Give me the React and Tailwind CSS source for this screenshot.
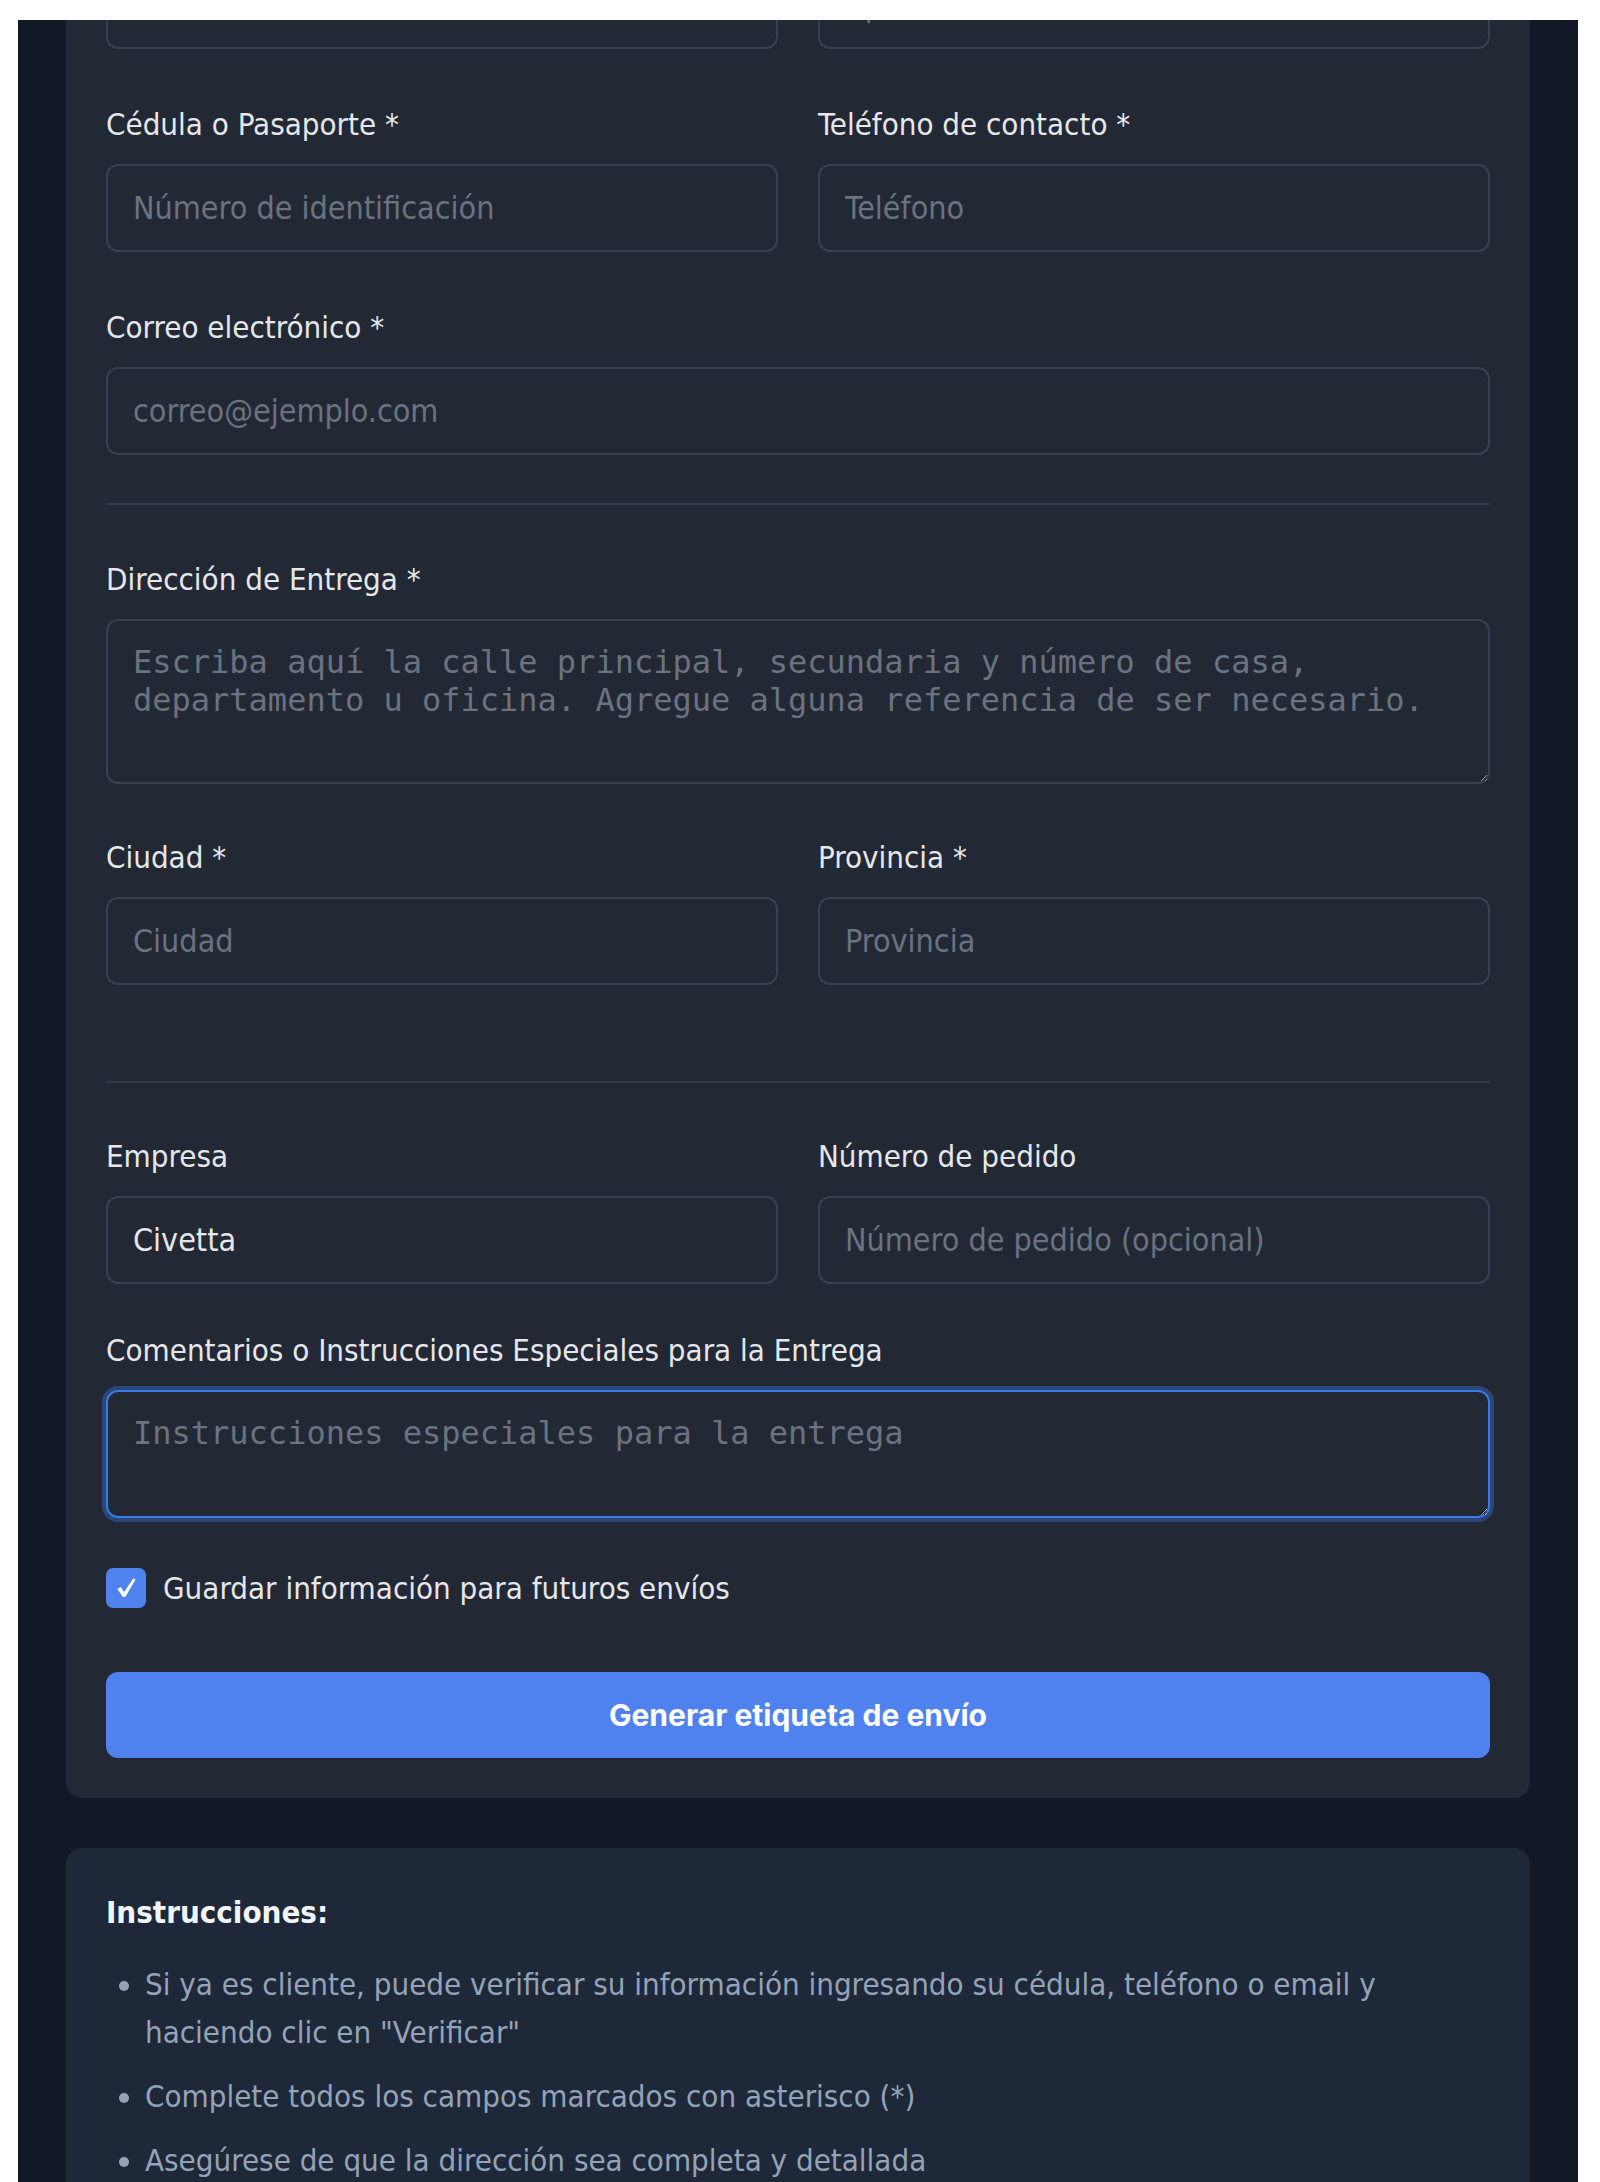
// --- shared styles ------------------------------------------------------

const SANS = "font-['DejaVu_Sans_Condensed','Liberation_Sans',sans-serif]";
const MONO = "font-['DejaVu_Sans_Mono','Liberation_Mono',monospace]";

const inputClass =
  "block w-full h-[88px] rounded-[12px] border-2 border-[#394150] bg-transparent px-[25px] text-[32px] text-[#e5e7eb] placeholder:text-[#6b7280] outline-none";

function Label({ children }) {
  return (
    <label className={`block text-[31px] leading-[48px] mb-[16px] text-[#e5e7eb] ${SANS}`}>
      {children}
    </label>
  );
}

function Field({ label, placeholder, value }) {
  return (
    <div>
      <Label>{label}</Label>
      <input
        type="text"
        placeholder={placeholder}
        defaultValue={value}
        className={`${inputClass} ${SANS}`}
      />
    </div>
  );
}

// heavy hand-drawn style tick, like the ✓ in the reference checkbox
function Tick() {
  return (
    <svg viewBox="0 0 24 24" className="h-[28px] w-[28px]" fill="white">
      <path d="M4.5 12.8 L7.6 11.2 L10.4 15.4 L18.4 3.6 L20.2 4.8 L11.4 19.8 L9.4 19.8 Z" />
    </svg>
  );
}

const INSTRUCTIONS = [
  'Si ya es cliente, puede verificar su información ingresando su cédula, teléfono o email y haciendo clic en "Verificar"',
  "Complete todos los campos marcados con asterisco (*)",
  "Asegúrese de que la dirección sea completa y detallada",
];

// --- page ---------------------------------------------------------------

export default function App() {
  return (
    <div className={`w-[1600px] h-[2182px] overflow-hidden bg-white pt-[20px] pl-[18px] pr-[22px] ${SANS}`}>
      <div className="h-full overflow-hidden bg-[#121826] px-[48px]">
        {/* form card, scrolled so its first row is cut off at the top */}
        <div className="-mt-[163px] rounded-[16px] bg-[#222834] p-[40px]">
          <div className="grid grid-cols-2 gap-x-[40px]">
            <Field label="Nombres *" placeholder="Nombres" />
            <Field label="Apellidos *" placeholder="Apellidos" />
          </div>

          <div className="mt-[51px] grid grid-cols-2 gap-x-[40px]">
            <Field label="Cédula o Pasaporte *" placeholder="Número de identificación" />
            <Field label="Teléfono de contacto *" placeholder="Teléfono" />
          </div>

          <div className="mt-[51px]">
            <Field label="Correo electrónico *" placeholder="correo@ejemplo.com" />
          </div>

          <hr className="mt-[48px] border-0 border-t-2 border-[#323948]" />

          <div className="mt-[50px]">
            <Label>Dirección de Entrega *</Label>
            <textarea
              rows={3}
              placeholder="Escriba aquí la calle principal, secundaria y número de casa, departamento u oficina. Agregue alguna referencia de ser necesario."
              className={`block w-full h-[165px] rounded-[12px] border-2 border-[#394150] bg-transparent px-[25px] py-[22px] text-[32px] leading-[normal] text-[#e5e7eb] placeholder:text-[#6b7280] outline-none ${MONO}`}
            />
          </div>

          <div className="mt-[49px] grid grid-cols-2 gap-x-[40px]">
            <Field label="Ciudad *" placeholder="Ciudad" />
            <Field label="Provincia *" placeholder="Provincia" />
          </div>

          <hr className="mt-[96px] border-0 border-t-2 border-[#323948]" />

          <div className="mt-[49px] grid grid-cols-2 gap-x-[40px]">
            <Field label="Empresa" value="Civetta" />
            <Field label="Número de pedido" placeholder="Número de pedido (opcional)" />
          </div>

          <div className="mt-[42px]">
            <Label>Comentarios o Instrucciones Especiales para la Entrega</Label>
            <textarea
              rows={2}
              autoFocus
              placeholder="Instrucciones especiales para la entrega"
              className={`block w-full h-[128px] rounded-[12px] border-2 border-[#3b7be8] bg-transparent px-[25px] py-[22px] text-[32px] leading-[normal] text-[#e5e7eb] placeholder:text-[#6b7280] outline-none ring-[4px] ring-[#3b82f6]/35 caret-[#e5e7eb] ${MONO}`}
            />
          </div>

          <label className="mt-[46px] flex items-center gap-[17px]">
            <span className="flex h-[40px] w-[40px] shrink-0 items-center justify-center rounded-[7px] bg-[#4f82ee]">
              <Tick />
            </span>
            <span className="text-[31px] leading-[48px] text-[#e5e7eb]">
              Guardar información para futuros envíos
            </span>
          </label>

          <button
            type="button"
            className="mt-[60px] flex h-[86px] w-full items-center justify-center rounded-[12px] bg-[#4f82ee] font-['Inter',sans-serif] text-[30px] font-bold text-white"
          >
            Generar etiqueta de envío
          </button>
        </div>

        {/* instructions card */}
        <div className="mt-[50px] rounded-[16px] bg-[#1f2839] p-[40px]">
          <h3 className="text-[31px] leading-[48px] font-bold text-[#f1f5f9]">Instrucciones:</h3>
          <ul className="mt-[24px] list-disc pl-[39px] space-y-[16px] text-[31px] leading-[48px] text-[#94a3b8] marker:text-[#94a3b8]">
            {INSTRUCTIONS.map((t) => (
              <li key={t}>{t}</li>
            ))}
          </ul>
        </div>
      </div>
    </div>
  );
}
